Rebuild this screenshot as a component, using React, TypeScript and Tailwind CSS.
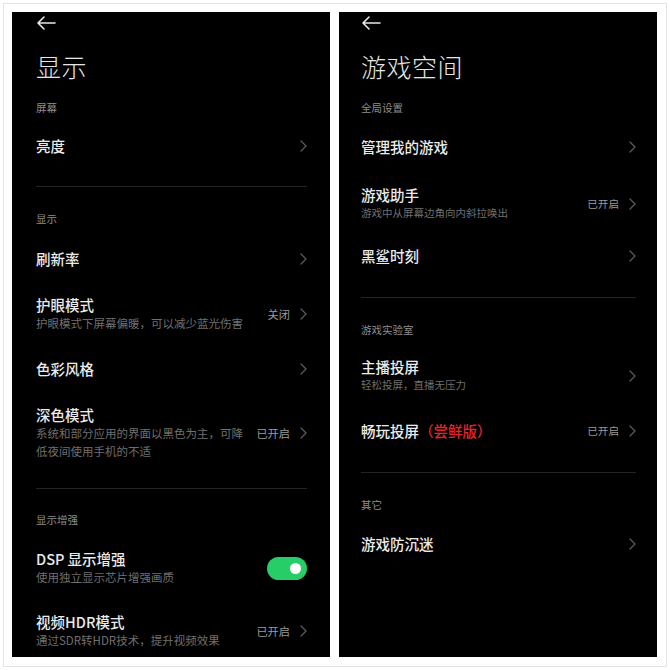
import React from "react";

const FONT = { fontFamily: '"Noto Sans CJK SC", "Noto Sans", sans-serif' };

function BackArrow() {
  return (
    <svg width="20" height="14" viewBox="0 0 20 14" fill="none">
      <path d="M19 7H2M8 1L2 7l6 6" stroke="#e8e8e8" strokeWidth="1.6" strokeLinecap="round" strokeLinejoin="round" />
    </svg>
  );
}

function Chevron() {
  return (
    <svg width="7" height="12" viewBox="0 0 7 12" fill="none" className="shrink-0">
      <path d="M1 1l5 5-5 5" stroke="#5a5a5a" strokeWidth="1.3" strokeLinecap="round" strokeLinejoin="round" />
    </svg>
  );
}

function Label({ text, h }: { text: string; h: string }) {
  return <div className={`${h} shrink-0 flex items-center text-[10.5px] text-[#8e8e8e]`}>{text}</div>;
}

function Divider({ h, top }: { h: string; top: string }) {
  return (
    <div className={`${h} shrink-0`}>
      <div className={`${top} h-px bg-[#242424]`} />
    </div>
  );
}

type RowProps = {
  h: string;
  title: React.ReactNode;
  subs?: string[];
  value?: string;
  subSize?: string;
  valueSize?: string;
  toggle?: boolean;
};

function Row({ h, title, subs, value, subSize = "text-[11.5px]", valueSize = "text-[11.2px]", toggle }: RowProps) {
  return (
    <div className={`${h} flex items-center justify-between shrink-0`}>
      <div className="flex flex-col">
        <div className="text-[14.5px] leading-[18px] font-medium text-[#ebebeb]">{title}</div>
        {subs?.map((s) => (
          <div key={s} className={`${subSize} leading-[18px] text-[#6f6f6f] whitespace-nowrap`}>
            {s}
          </div>
        ))}
      </div>
      {toggle ? (
        <div className="w-[40px] h-[23px] rounded-full bg-[#27cd66] flex items-center justify-end pr-[6px]">
          <div className="w-[11px] h-[11px] rounded-full bg-white" />
        </div>
      ) : (
        <div className="flex items-center gap-[10px]">
          {value && <span className={`${valueSize} text-[#9a9a9a]`}>{value}</span>}
          <Chevron />
        </div>
      )}
    </div>
  );
}

function Header({ title }: { title: string }) {
  return (
    <>
      <div className="h-[22px] shrink-0 flex items-center">
        <BackArrow />
      </div>
      <div className="h-[66px] shrink-0 flex items-center text-[25px] font-light text-[#e6e6e6] tracking-[0.5px]">
        {title}
      </div>
    </>
  );
}

function LeftPanel() {
  return (
    <div className="w-[318px] h-[645px] bg-black overflow-hidden flex flex-col pl-6 pr-[23px]">
      <Header title="显示" />
      <Label text="屏幕" h="h-[16px]" />
      <Row h="h-[60px]" title="亮度" />
      <Divider h="h-[22px]" top="mt-[10px]" />
      <Label text="显示" h="h-[42px]" />
      <Row h="h-[38px]" title="刷新率" />
      <Row h="h-[72px]" title="护眼模式" subs={["护眼模式下屏幕偏暖，可以减少蓝光伤害"]} value="关闭" />
      <Row h="h-[38px]" title="色彩风格" />
      <Row
        h="h-[90px]"
        title="深色模式"
        subs={["系统和部分应用的界面以黑色为主，可降", "低夜间使用手机的不适"]}
        value="已开启"
      />
      <Divider h="h-[20px]" top="mt-[10px]" />
      <Label text="显示增强" h="h-[44px]" />
      <Row h="h-[52px]" title="DSP 显示增强" subs={["使用独立显示芯片增强画质"]} toggle />
      <Row h="h-[74px]" title="视频HDR模式" subs={["通过SDR转HDR技术，提升视频效果"]} value="已开启" />
    </div>
  );
}

function RightPanel() {
  return (
    <div className="w-[318px] h-[645px] bg-black overflow-hidden flex flex-col pl-[22px] pr-[21px]">
      <Header title="游戏空间" />
      <Label text="全局设置" h="h-[16px]" />
      <Row h="h-[62px]" title="管理我的游戏" />
      <Row
        h="h-[52px]"
        title="游戏助手"
        subs={["游戏中从屏幕边角向内斜拉唤出"]}
        subSize="text-[10.5px]"
        value="已开启"
        valueSize="text-[10.6px]"
      />
      <Row h="h-[52px]" title="黑鲨时刻" />
      <Divider h="h-[30px]" top="mt-[15px]" />
      <Label text="游戏实验室" h="h-[36px]" />
      <Row h="h-[56px]" title="主播投屏" subs={["轻松投屏，直播无压力"]} subSize="text-[10.5px]" />
      <Row
        h="h-[54px]"
        title={
          <span>
            畅玩投屏<span className="text-[#e3262b]">（尝鲜版）</span>
          </span>
        }
        value="已开启"
        valueSize="text-[10.6px]"
      />
      <Divider h="h-[28px]" top="mt-[14px]" />
      <Label text="其它" h="h-[38px]" />
      <Row h="h-[40px]" title="游戏防沉迷" />
    </div>
  );
}

export default function App() {
  return (
    <div className="w-[670px] h-[670px] bg-white p-[3px]" style={FONT}>
      <div className="w-full h-full border border-[#e4e4e4] pt-[8px] pl-[8px] flex gap-[9px]">
        <LeftPanel />
        <RightPanel />
      </div>
    </div>
  );
}
